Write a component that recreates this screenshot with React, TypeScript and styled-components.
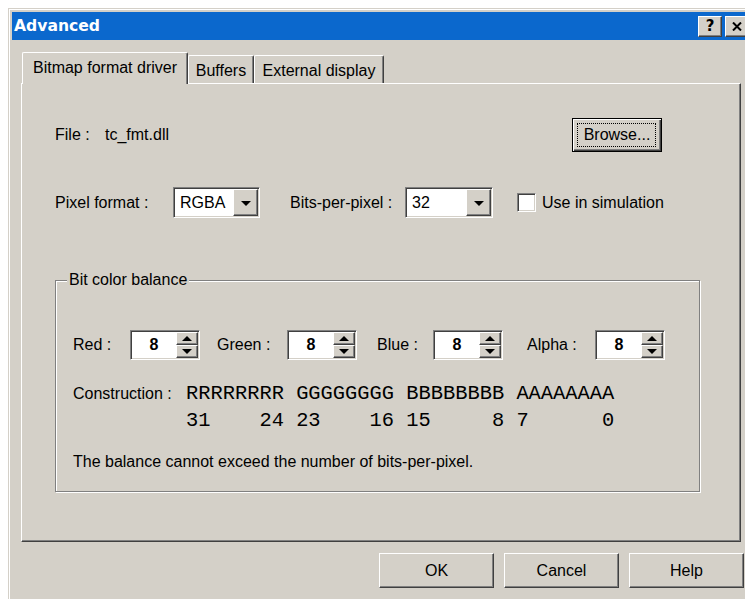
import React from 'react';
import styled, { createGlobalStyle, css } from 'styled-components';

const face = '#d4d0c8';
const shadow = '#808080';
const darkShadow = '#404040';
const hilite = '#ffffff';
const titleBlue = '#0b68cd';

const GlobalStyle = createGlobalStyle`
	html, body {
		margin: 0;
		padding: 0;
		background: #fff;
		overflow: hidden;
	}
	body {
		font-family: "Liberation Sans", Arial, sans-serif;
		font-size: 16px;
		color: #000;
	}
`;

// classic 3d edges
const raised = css`
	border-top: 1px solid ${hilite};
	border-left: 1px solid ${hilite};
	border-right: 1px solid ${darkShadow};
	border-bottom: 1px solid ${darkShadow};
	box-shadow: inset -1px -1px 0 ${shadow};
`;

const sunken = css`
	border-top: 1px solid ${shadow};
	border-left: 1px solid ${shadow};
	border-right: 1px solid ${hilite};
	border-bottom: 1px solid ${hilite};
	padding: 1px;
	box-shadow: inset 1px 1px 0 ${darkShadow}, inset -1px -1px 0 ${face};
`;

const Page = styled.div`
	padding: 8px 0 0 8px;
	width: 770px;
`;

const Window = styled.div`
	box-sizing: border-box;
	width: 747px;
	height: 610px;
	background: ${face};
	border-top: 1px solid ${face};
	border-left: 1px solid ${face};
	border-right: 1px solid ${darkShadow};
	padding: 3px;
	box-shadow: inset 1px 1px 0 ${hilite};
`;

const TitleBar = styled.div`
	height: 28px;
	display: flex;
	align-items: center;
	padding: 0 2px;
	background: ${titleBlue};
`;

const TitleText = styled.span`
	flex: 1;
	color: #fff;
	font: bold 15.6px "DejaVu Sans", Verdana, sans-serif;
	line-height: 18px;
`;

const CaptionButton = styled.div<{ $gap?: number }>`
	box-sizing: border-box;
	width: 24px;
	height: 21px;
	margin-left: ${p => p.$gap || 0}px;
	display: flex;
	align-items: center;
	justify-content: center;
	background: ${face};
	${raised};
	font: bold 15px "DejaVu Sans", Verdana, sans-serif;
	line-height: 1;
`;

const TabStrip = styled.div`
	height: 31px;
	display: flex;
	align-items: flex-start;
	padding: 12px 0 0 10px;
`;

const Tab = styled.div<{ $w: number; $active?: boolean }>`
	box-sizing: border-box;
	width: ${p => p.$w}px;
	height: ${p => (p.$active ? 32 : 28)}px;
	margin-top: ${p => (p.$active ? 0 : 3)}px;
	padding-top: 6px;
	line-height: 18px;
	text-align: center;
	white-space: nowrap;
	background: ${face};
	border-top: 1px solid ${hilite};
	border-left: 1px solid ${hilite};
	border-right: 1px solid ${darkShadow};
	border-radius: 2px 2px 0 0;
	box-shadow: inset -1px 0 0 ${shadow};
	${p => p.$active && css`
		position: relative;
		z-index: 1;
	`}
`;

const Panel = styled.div`
	box-sizing: border-box;
	width: 720px;
	height: 459px;
	margin-left: 9px;
	padding: 34px 0 0 33px;
	border-top: 1px solid ${hilite};
	border-left: 1px solid ${hilite};
	border-right: 1px solid ${darkShadow};
	border-bottom: 1px solid ${darkShadow};
	box-shadow: inset -1px -1px 0 ${shadow};
`;

const FileRow = styled.div`
	height: 34px;
	display: flex;
	align-items: center;
	padding-right: 78px;
`;

const Label = styled.span<{ $w?: number; $ml?: number }>`
	flex: none;
	width: ${p => (p.$w ? `${p.$w}px` : 'auto')};
	margin-left: ${p => p.$ml || 0}px;
	white-space: nowrap;
	line-height: 18px;
`;

const DefaultButton = styled.div`
	position: relative;
	box-sizing: border-box;
	width: 90px;
	height: 34px;
	margin-left: auto;
	display: flex;
	align-items: center;
	justify-content: center;
	background: ${face};
	border: 1px solid #000;
	box-shadow: inset 1px 1px 0 ${hilite}, inset -1px -1px 0 ${darkShadow}, inset -2px -2px 0 ${shadow};

	&::after {
		content: '';
		position: absolute;
		inset: 4px 5px 4px 4px;
		border: 1px dotted #000;
	}
`;

const PixelRow = styled.div`
	height: 31px;
	margin-top: 35px;
	display: flex;
	align-items: center;
`;

const Combo = styled.div<{ $w: number }>`
	box-sizing: border-box;
	width: ${p => p.$w}px;
	height: 31px;
	display: flex;
	${sunken};
`;

const ComboText = styled.div`
	flex: 1;
	background: #fff;
	padding-left: 5px;
	display: flex;
	align-items: center;
`;

const DropButton = styled.div`
	box-sizing: border-box;
	width: 25px;
	display: flex;
	align-items: center;
	justify-content: center;
	background: ${face};
	${raised};

	&::after {
		content: '';
		border-left: 5px solid transparent;
		border-right: 5px solid transparent;
		border-top: 5px solid #000;
		margin-top: 1px;
	}
`;

const CheckBox = styled.div`
	box-sizing: border-box;
	width: 19px;
	height: 19px;
	margin-left: 24px;
	background: #fff;
	${sunken};
`;

const Group = styled.div`
	position: relative;
	box-sizing: border-box;
	width: 645px;
	height: 212px;
	margin-top: 62px;
	padding: 49px 0 0 17px;
	border: 1px solid ${shadow};
	box-shadow: inset 1px 1px 0 ${hilite}, 1px 1px 0 ${hilite};
`;

const GroupCaption = styled.span`
	position: absolute;
	top: -10px;
	left: 11px;
	padding: 0 2px;
	line-height: 18px;
	background: ${face};
`;

const SpinRow = styled.div`
	height: 30px;
	display: flex;
	align-items: center;
`;

const SpinFrame = styled.div`
	box-sizing: border-box;
	width: 70px;
	height: 30px;
	display: flex;
	${sunken};
`;

const SpinEdit = styled.div`
	flex: 1;
	background: #fff;
	display: flex;
	align-items: center;
	justify-content: center;
	font-weight: bold;
`;

const SpinArrows = styled.div`
	width: 22px;
	display: flex;
	flex-direction: column;
`;

const SpinButton = styled.div<{ $up?: boolean }>`
	box-sizing: border-box;
	flex: 1;
	display: flex;
	align-items: center;
	justify-content: center;
	background: ${face};
	${raised};

	&::after {
		content: '';
		border-left: 5px solid transparent;
		border-right: 5px solid transparent;
		${p => (p.$up ? 'border-bottom: 5px solid #000;' : 'border-top: 5px solid #000;')}
	}
`;

const BitsRow = styled.div<{ $mt: number; $indent?: number }>`
	height: 27px;
	margin-top: ${p => p.$mt}px;
	padding-left: ${p => p.$indent || 0}px;
	display: flex;
	align-items: center;
`;

const Mono = styled.span`
	font-family: "Liberation Mono", "Courier New", monospace;
	font-size: 20.4px;
	line-height: 27px;
	white-space: pre;
`;

const Note = styled.div`
	margin-top: 19px;
	line-height: 18px;
`;

const ButtonRow = styled.div`
	display: flex;
	justify-content: flex-end;
	gap: 10px;
	margin-top: 11px;
	padding-right: 7px;
`;

const PushButton = styled.div`
	box-sizing: border-box;
	width: 115px;
	height: 35px;
	display: flex;
	align-items: center;
	justify-content: center;
	background: ${face};
	${raised};
`;

const CloseGlyph = () => (
	<svg width="10" height="9" viewBox="0 0 10 9">
		<path d="M1 0.5 L9 8.5 M9 0.5 L1 8.5" stroke="#000" strokeWidth="2" />
	</svg>
);

const Spinner: React.FC<{ value: number }> = ({ value }) => (
	<SpinFrame>
		<SpinEdit>{value}</SpinEdit>
		<SpinArrows>
			<SpinButton $up />
			<SpinButton />
		</SpinArrows>
	</SpinFrame>
);

const channels = [
	{ name: 'Red :', w: 57, ml: 0 },
	{ name: 'Green :', w: 70, ml: 17 },
	{ name: 'Blue :', w: 56, ml: 20 },
	{ name: 'Alpha :', w: 68, ml: 24 },
];

export default function App() {
	return (
		<>
			<GlobalStyle />
			<Page>
				<Window>
					<TitleBar>
						<TitleText>Advanced</TitleText>
						<CaptionButton>?</CaptionButton>
						<CaptionButton $gap={3}><CloseGlyph /></CaptionButton>
					</TitleBar>

					<TabStrip>
						<Tab $w={166} $active>Bitmap format driver</Tab>
						<Tab $w={66}>Buffers</Tab>
						<Tab $w={130}>External display</Tab>
					</TabStrip>

					<Panel>
						<FileRow>
							<Label $w={50}>File :</Label>
							<Label>tc_fmt.dll</Label>
							<DefaultButton>Browse...</DefaultButton>
						</FileRow>

						<PixelRow>
							<Label $w={118}>Pixel format :</Label>
							<Combo $w={87}>
								<ComboText>RGBA</ComboText>
								<DropButton />
							</Combo>
							<Label $w={115} $ml={30}>Bits-per-pixel :</Label>
							<Combo $w={88}>
								<ComboText>32</ComboText>
								<DropButton />
							</Combo>
							<CheckBox />
							<Label $ml={6}>Use in simulation</Label>
						</PixelRow>

						<Group>
							<GroupCaption>Bit color balance</GroupCaption>
							<SpinRow>
								{channels.map(c => (
									<React.Fragment key={c.name}>
										<Label $w={c.w} $ml={c.ml}>{c.name}</Label>
										<Spinner value={8} />
									</React.Fragment>
								))}
							</SpinRow>
							<BitsRow $mt={20}>
								<Label $w={113}>Construction :</Label>
								<Mono>RRRRRRRR GGGGGGGG BBBBBBBB AAAAAAAA</Mono>
							</BitsRow>
							<BitsRow $mt={0} $indent={113}>
								<Mono>{'31    24 23    16 15     8 7      0'}</Mono>
							</BitsRow>
							<Note>The balance cannot exceed the number of bits-per-pixel.</Note>
						</Group>
					</Panel>

					<ButtonRow>
						<PushButton>OK</PushButton>
						<PushButton>Cancel</PushButton>
						<PushButton>Help</PushButton>
					</ButtonRow>
				</Window>
			</Page>
		</>
	);
}
